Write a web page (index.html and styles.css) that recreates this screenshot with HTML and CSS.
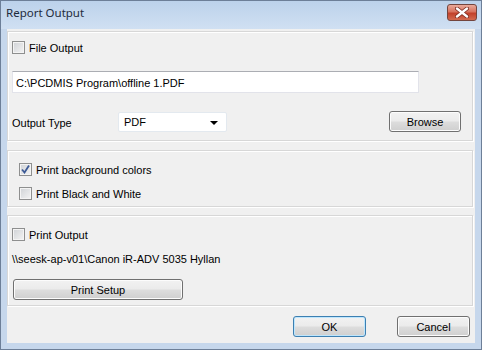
FILE: index.html
```html
<!DOCTYPE html>
<html lang="en">
<head>
  <meta charset="UTF-8" />
  <title>Report Output</title>
  <link rel="stylesheet" href="styles.css">
</head>
<body>
  <div class="window">
    <div class="titlebar">
      <span class="title">Report Output</span>
      <span class="close">
        <svg width="14" height="11" viewBox="0 0 14 11">
          <path d="M2 1.5 L12 9.5 M12 1.5 L2 9.5" stroke="#7a2a1e" stroke-width="4" stroke-linecap="round" />
          <path d="M2 1.5 L12 9.5 M12 1.5 L2 9.5" stroke="#fff" stroke-width="2.4" stroke-linecap="round" />
        </svg>
      </span>
    </div>

    <div class="client">
      <div class="panel panel-file">
        <label class="check"><span class="box"></span><span class="text">File Output</span></label>
        <div class="textbox">C:\PCDMIS Program\offline 1.PDF</div>
        <div class="type-row">
          <span class="type-label">Output Type</span>
          <div class="combo">
            <span>PDF</span>
            <span class="arrow"></span>
          </div>
          <button class="btn browse">Browse</button>
        </div>
      </div>

      <div class="panel panel-colors">
        <label class="check">
          <span class="box checked">
            <svg width="9" height="9" viewBox="0 0 9 9">
              <path d="M1 4.5 L3.5 7.5 L8 0.5" fill="none" stroke="#3d5a96" stroke-width="1.8" />
            </svg>
          </span><span class="text">Print background colors</span>
        </label>
        <label class="check"><span class="box"></span><span class="text">Print Black and White</span></label>
      </div>

      <div class="panel panel-print">
        <label class="check"><span class="box"></span><span class="text">Print Output</span></label>
        <div class="printer">\\seesk-ap-v01\Canon iR-ADV 5035 Hyllan</div>
        <button class="btn setup">Print Setup</button>
      </div>

      <div class="footer">
        <button class="btn default">OK</button>
        <button class="btn">Cancel</button>
      </div>
    </div>
  </div>
</body>
</html>
```

FILE: styles.css
```css
* {
  box-sizing: border-box;
}

body {
  margin: 0;
  font-family: "Liberation Sans", Arial, sans-serif;
  font-size: 11px;
  color: #000;
  background: #fff;
}

.window {
  width: 482px;
  height: 350px;
  border: 1px solid #6d7f98;
  background: #c6d7ec;
  padding: 0 6px 6px 6px;
  display: flex;
  flex-direction: column;
}

.titlebar {
  height: 28px;
  margin: 0 -6px;
  padding: 0 4px 0 5px;
  display: flex;
  align-items: center;
  background: linear-gradient(#bcd2eb, #d0e0f2);
}

.title {
  font-family: "Noto Sans", sans-serif;
  font-size: 11.5px;
  color: #1e2b3c;
  margin-top: -6px;
}

.close {
  margin-left: auto;
  margin-top: -6px;
  width: 30px;
  height: 17px;
  border: 1px solid #73453e;
  border-radius: 3px;
  background: linear-gradient(#e9a99a, #d7735f 45%, #c2412b 55%, #d26a4f);
  display: flex;
  align-items: center;
  justify-content: center;
}

.client {
  flex: 1;
  background: #f0f0f0;
  padding: 2px 2px 0 0;
}

.panel {
  width: 466px;
  border: 1px solid #d7d7d7;
  box-shadow: inset 1px 1px #fff, 1px 1px #fff;
}

.check {
  display: flex;
  align-items: center;
  height: 13px;
  line-height: 13px;
}

.check .text {
  padding-top: 2px;
}

.box {
  width: 13px;
  height: 13px;
  margin-right: 4px;
  border: 1px solid #8e8f8f;
  background: linear-gradient(135deg, #cfd2d6, #f4f4f4);
  box-shadow: inset 0 0 0 1px #f4f4f4;
  display: flex;
  align-items: center;
  justify-content: center;
}

.panel-file {
  padding: 9px 11px 8px 4px;
}

.textbox {
  width: 407px;
  height: 22px;
  margin-top: 17px;
  padding: 1px 3px 0;
  line-height: 20px;
  background: #fff;
  border: 1px solid #e2e3ea;
  border-top-color: #abadb3;
}

.type-row {
  display: flex;
  align-items: center;
  height: 21px;
  margin-top: 18px;
}

.type-label {
  width: 106px;
  padding-top: 2px;
}

.combo {
  width: 109px;
  height: 20px;
  padding: 0 5px;
  background: #fff;
  border: 1px solid #e3e9ef;
  border-radius: 2px;
  display: flex;
  align-items: center;
}

.arrow {
  margin-left: auto;
  margin-right: 3px;
  margin-top: 2px;
  border-left: 4px solid transparent;
  border-right: 4px solid transparent;
  border-top: 4px solid #000;
}

.btn {
  height: 21px;
  width: 73px;
  padding: 1px 0 0;
  font-family: inherit;
  font-size: 11px;
  color: #000;
  border: 1px solid #707070;
  border-radius: 3px;
  background: linear-gradient(#f2f2f2, #ebebeb 48%, #dddddd 52%, #cfcfcf);
  box-shadow: inset 0 0 0 1px #fcfcfc;
}

.browse {
  margin-left: auto;
  width: 72px;
}

.panel-colors {
  margin-top: 9px;
  padding: 12px 4px 6px 11px;
}

.panel-colors .check + .check {
  margin-top: 11px;
}

.panel-print {
  margin-top: 8px;
  padding: 12px 4px 5px 4px;
}

.printer {
  height: 13px;
  line-height: 13px;
  margin-top: 11px;
  padding-top: 1px;
}

.setup {
  width: 170px;
  margin-top: 14px;
  margin-left: 1px;
  display: block;
}

.footer {
  display: flex;
  justify-content: flex-end;
  gap: 31px;
  margin-top: 10px;
  padding-right: 3px;
}

.default {
  border-color: #3c7fb1;
  box-shadow: inset 0 0 0 1px #bee6fd;
}
```
